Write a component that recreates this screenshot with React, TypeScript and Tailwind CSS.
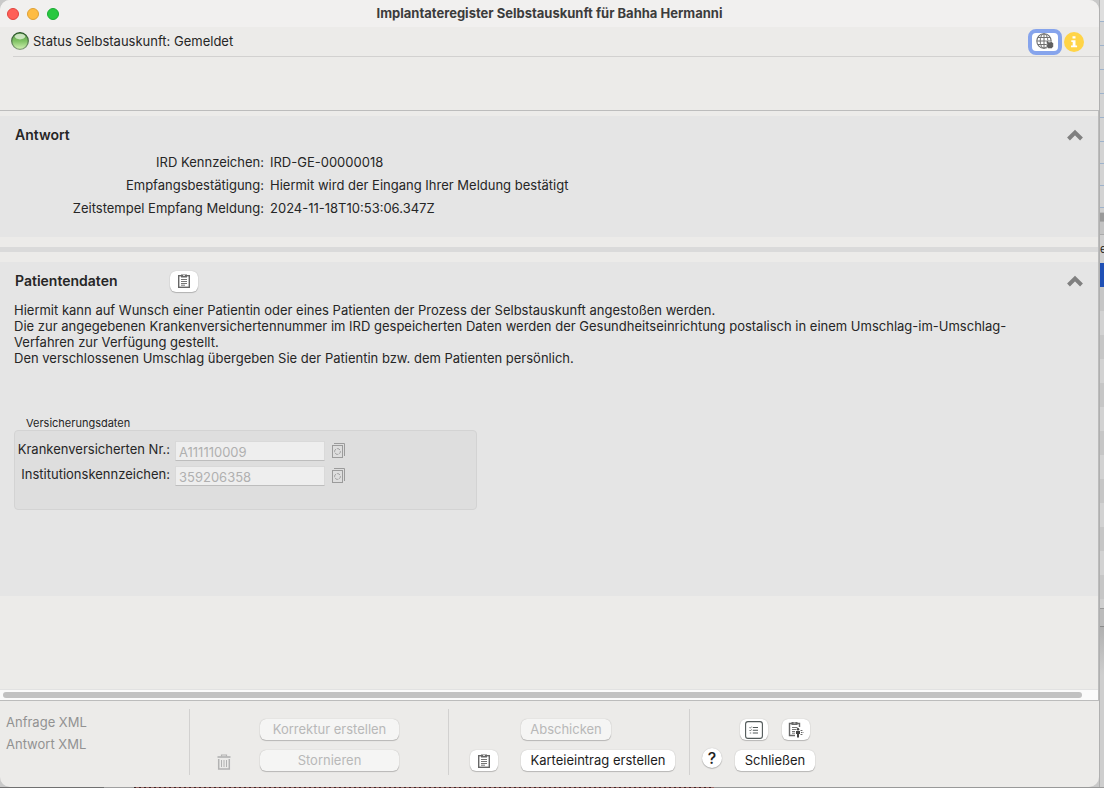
import React, { useState } from 'react';
import clsx from 'clsx';

interface IconButtonProps {
  label: string;
  children: React.ReactNode;
}

interface PushButtonProps {
  children: React.ReactNode;
  className?: string;
  disabled?: boolean;
}

interface InsuranceFieldProps {
  id: string;
  label: string;
  value: string;
}

const answerRows = [
  { label: 'IRD Kennzeichen:', value: 'IRD-GE-00000018' },
  { label: 'Empfangsbestätigung:', value: 'Hiermit wird der Eingang Ihrer Meldung bestätigt' },
  { label: 'Zeitstempel Empfang Meldung:', value: '2024-11-18T10:53:06.347Z' }
];

const ClipboardIcon = () => (
  <svg width="12" height="14" viewBox="0 0 12 14" fill="none" stroke="#666" aria-hidden="true">
    <rect x="0.7" y="1.7" width="10.6" height="11.6" strokeWidth="1.4" />
    <path d="M3 0.5h6v3H3z" fill="#666" stroke="none" />
    <path d="M5 1.5h2" stroke="#ddd" />
    <path d="M3 5.5h6M3 7.5h6M3 9.5h6M3 11.2h4" strokeWidth="0.9" />
  </svg>
);

const ClipboardSendIcon = () => (
  <svg width="16" height="17" viewBox="0 0 16 17" fill="none" stroke="#666" aria-hidden="true">
    <path d="M11.5 6V2.5h-10v12H7" strokeWidth="1.4" />
    <path d="M3.5 1h6v3h-6z" fill="#666" stroke="none" />
    <path d="M5.5 2h2" stroke="#ddd" />
    <path d="M4 6.5h5.5M4 8.5h4M4 10.5h3M4 12.2h3" strokeWidth="0.9" />
    <circle cx="10" cy="8.3" r="1.3" fill="#444" stroke="none" />
    <path d="M8 10h4v3h-1v3.5H9V13H8z" fill="#444" stroke="none" />
    <path d="M12.5 9.5H15M13 11.5h2.5M12.5 13.5H15" strokeDasharray="1.5 0.6" />
  </svg>
);

const ChecklistIcon = () => (
  <svg width="18" height="18" viewBox="0 0 18 18" fill="none" stroke="#505858" aria-hidden="true">
    <rect x="0.6" y="0.6" width="16.8" height="16.8" rx="2.4" strokeWidth="1.1" />
    <path d="M7.8 6.5H13M7.8 9.3H13M7.8 12H13" strokeWidth="1.1" />
    <path d="M4.5 6.4l.8.8 1.3-1.6M4.5 9.2l.8.8 1.3-1.6M4.8 12h1.4" strokeWidth="0.8" />
  </svg>
);

const GlobeIcon = () => (
  <svg width="18" height="17" viewBox="0 0 18 17" fill="none" stroke="#707070" aria-hidden="true">
    <circle cx="8" cy="8" r="7.2" strokeWidth="1.1" />
    <ellipse cx="8" cy="8" rx="3.8" ry="7.2" />
    <path d="M8 1v14M1 8h14M2 4.5h12M2 11.5h9" />
    <path
      d="M10 7.8l1.4-.6 1.4 2 2.6-.6 2 1.6v3.4l-1.6 2h-3.6l-2-2.6.8-1.4z"
      fill="#5e5e5e"
      stroke="#fff"
      strokeWidth="0.5"
    />
  </svg>
);

const CopyIcon = () => (
  <svg width="13" height="15" viewBox="0 0 13 15" fill="none" stroke="#9b9b9b" aria-hidden="true">
    <path d="M2 0.5h10.5V13" />
    <rect x="0.5" y="2.5" width="10" height="12" />
    <circle cx="5.5" cy="8.5" r="2.9" strokeDasharray="3.4 1.15" strokeDashoffset="1" />
  </svg>
);

const TrashIcon = () => (
  <svg width="14" height="16" viewBox="0 0 14 16" fill="none" stroke="#b2b2b2" aria-hidden="true">
    <path d="M4.5 2.5V1h5v1.5" strokeWidth="1.2" />
    <path d="M0.5 3h13" strokeWidth="1.6" />
    <path d="M1.7 5v10h10.6V5" strokeWidth="1.5" />
    <path d="M4.5 6v7M7 6v7M9.5 6v7" />
  </svg>
);

const StatusLamp = () => (
  <svg width="18" height="18" viewBox="0 0 18 18" aria-hidden="true">
    <defs>
      <linearGradient id="lamp" x1="0" y1="0" x2="0" y2="1">
        <stop offset="0" stopColor="#5c9a4c" />
        <stop offset="0.5" stopColor="#7fc263" />
        <stop offset="1" stopColor="#d3f2b4" />
      </linearGradient>
      <linearGradient id="rim" x1="0" y1="0" x2="0" y2="1">
        <stop offset="0" stopColor="#245024" />
        <stop offset="1" stopColor="#83a177" />
      </linearGradient>
    </defs>
    <circle cx="9" cy="9" r="8.3" fill="url(#lamp)" stroke="url(#rim)" strokeWidth="1.3" />
    <ellipse cx="9" cy="4.6" rx="5.2" ry="2.8" fill="#e9f7e2" opacity="0.75" />
  </svg>
);

const IconButton = ({ label, children }: IconButtonProps) => (
  <button
    aria-label={label}
    className="flex h-[21px] w-7 items-center justify-center rounded-md bg-white shadow-[0_0_1px_#0004,0_1px_1px_#0003]"
  >
    {children}
  </button>
);

const PushButton = ({ children, className, disabled }: PushButtonProps) => (
  <button
    disabled={disabled}
    className={clsx(
      'h-[21px] rounded-md pb-[2px] text-center shadow-[0_0_1px_#0004,0_1px_1px_#0003]',
      disabled ? 'bg-[#f5f5f4] text-[#b8b8b8]' : 'bg-white text-[#1c1c1c]',
      className
    )}
  >
    {children}
  </button>
);

const CollapseButton = ({ open, onClick }: { open: boolean; onClick: () => void }) => (
  <button aria-label="Bereich ein- oder ausklappen" aria-expanded={open} onClick={onClick}>
    <svg width="16" height="12" viewBox="0 0 16 12" className={open ? '' : 'rotate-180'}>
      <path d="M1.5 10L8 3.5l6.5 6.5" fill="none" stroke="#808080" strokeWidth="4" />
    </svg>
  </button>
);

const InsuranceField = ({ id, label, value }: InsuranceFieldProps) => (
  <div className="flex h-[25px] items-start">
    <label htmlFor={id} className="w-[155px] text-right">
      {label}
    </label>
    <input
      id={id}
      disabled
      defaultValue={value}
      className="ml-[5px] h-5 w-[150px] border border-[#d9d9d9] border-b-[#bdbdbd] bg-[#eee] px-[3px] pt-[2px] text-[#b0b0b0]"
    />
    <button disabled aria-label={`${label} übernehmen`} className="ml-[7px] mt-[2px]">
      <CopyIcon />
    </button>
  </div>
);

// Slice of the application window that lies behind this one
const BackgroundStrip = () => (
  <div className="flex w-[5px] shrink-0 flex-col overflow-hidden border-l border-[#b0b0b0] bg-[#cfcfcf]">
    <div className="h-[22px] shrink-0 border-b border-[#9eb3cc] bg-[#dedede]" />
    {[24, 24, 24, 24, 24, 22, 22, 22].map((height, index) => (
      <div key={index} className="shrink-0 border-b border-[#9eb3cc] bg-[#d3d3d3]" style={{ height }} />
    ))}
    <div className="h-[5px] border-b border-[#bbb]" />
    <div className="h-2 bg-[#999]" />
    <div className="h-[14px] border-y border-[#aaa] bg-[#c3c3c3]" />
    <div className="flex h-[28px] items-center text-[11px] text-[#222]">e</div>
    <div className="h-6 bg-[#1f50b5]" />
    {[...Array(13)].map((_, index) => (
      <div key={index} className={clsx('h-6 shrink-0', index % 2 === 0 ? 'bg-[#c6c6c6]' : 'bg-[#d2d2d2]')} />
    ))}
    <div className="h-[10px] border-b border-[#999]" />
    <div className="h-[18px] border-b border-[#8a8a8a] bg-[#bbb]" />
    <div className="flex-1 bg-linear-to-b from-[#b0b0b0] via-[#cecece] via-30% to-[#cecece]" />
  </div>
);

const App = () => {
  const [answerOpen, setAnswerOpen] = useState(true);
  const [patientOpen, setPatientOpen] = useState(true);

  return (
    <div className="flex h-screen flex-col overflow-hidden bg-[#c9c9c9] font-['Inter',sans-serif] text-[13px] leading-4 text-[#262626]">
      <div className="flex min-h-0 flex-1">
        <main className="flex min-w-0 flex-1 flex-col overflow-hidden rounded-[10px] bg-[#ecebe9]">
          <header className="grid h-[27px] shrink-0 grid-cols-[1fr_auto_1fr] items-center bg-[#f1f0ef] px-[7px]">
            <div className="flex gap-2">
              <button aria-label="Fenster schließen" className="size-3 rounded-full border border-[#e0443e] bg-[#ff5f57]" />
              <button aria-label="Minimieren" className="size-3 rounded-full border border-[#dea035] bg-[#febc42]" />
              <button aria-label="Maximieren" className="size-3 rounded-full border border-[#1aab33] bg-[#28c840]" />
            </div>
            <h1 className="pb-[2px] font-bold text-[#3c3c3c]">Implantateregister Selbstauskunft für Bahha Hermanni</h1>
          </header>

          <div className="flex h-[29px] shrink-0 items-center pl-[11px] pr-[15px]">
            <div className="flex items-center gap-1 pb-[2px]">
              <StatusLamp />
              <span>Status Selbstauskunft: Gemeldet</span>
            </div>
            <button
              aria-label="Webseite öffnen"
              className="ml-auto flex h-[26px] w-[34px] items-center justify-center rounded-lg border-4 border-[#86a4ec] bg-white"
            >
              <GlobeIcon />
            </button>
            <button aria-label="Information" className="ml-[2px]">
              <svg width="20" height="20" viewBox="0 0 20 20">
                <circle cx="10" cy="10" r="10" fill="#ffd447" />
                <path d="M8.5 4.3h3v2.3h-3zM7.3 8.3h4.2v5.2h1.6v1.7H7v-1.7h1.7V10H7.3z" fill="#fff" />
              </svg>
            </button>
          </div>
          <div className="ml-[13px] h-px shrink-0 bg-[#d2d1d0]" />

          <div className="mt-[53px] flex min-h-0 flex-1 flex-col border-y border-r border-[#bcbcbc]">
            <section className="mt-[5px] shrink-0 bg-[#e5e5e5]">
              <div className="flex h-[38px] items-center justify-between px-[15px]">
                <h2 className="text-sm font-semibold">Antwort</h2>
                <CollapseButton open={answerOpen} onClick={() => setAnswerOpen(!answerOpen)} />
              </div>
              {answerOpen && (
                <dl className="grid grid-cols-[264px_1fr] gap-x-[6px] gap-y-[7px] pb-[21px]">
                  {answerRows.map((row) => (
                    <React.Fragment key={row.label}>
                      <dt className="text-right">{row.label}</dt>
                      <dd>{row.value}</dd>
                    </React.Fragment>
                  ))}
                </dl>
              )}
            </section>

            <div className="my-[10px] h-[5px] shrink-0 bg-[#dadada]" />

            <section className={clsx('shrink-0 bg-[#e5e5e5]', patientOpen && 'pb-[86px]')}>
              <div className="flex h-[38px] items-center px-[15px]">
                <h2 className="w-[155px] text-sm font-semibold">Patientendaten</h2>
                <IconButton label="Patientendaten kopieren">
                  <ClipboardIcon />
                </IconButton>
                <div className="ml-auto flex">
                  <CollapseButton open={patientOpen} onClick={() => setPatientOpen(!patientOpen)} />
                </div>
              </div>
              {patientOpen && (
                <div className="px-[14px] pt-[2px]">
                  <p className="whitespace-nowrap">
                    Hiermit kann auf Wunsch einer Patientin oder eines Patienten der Prozess der Selbstauskunft angestoßen werden.
                    <br />
                    Die zur angegebenen Krankenversichertennummer im IRD gespeicherten Daten werden der Gesundheitseinrichtung postalisch in einem Umschlag-im-Umschlag-
                    <br />
                    Verfahren zur Verfügung gestellt.
                    <br />
                    Den verschlossenen Umschlag übergeben Sie der Patientin bzw. dem Patienten persönlich.
                  </p>
                  <h3 className="mt-[50px] pl-3 text-[11px] leading-[14px]">Versicherungsdaten</h3>
                  <div className="h-20 w-[463px] rounded-[4px] border border-[#d3d3d3] bg-[#dedede] pt-[10px]">
                    <InsuranceField id="kv-nr" label="Krankenversicherten Nr.:" value="A111110009" />
                    <InsuranceField id="ik" label="Institutionskennzeichen:" value="359206358" />
                  </div>
                </div>
              )}
            </section>

            <div className="mt-auto h-[11px] shrink-0 border-t border-[#e2e2e2] bg-[#fafafa] pl-[3px] pr-4 pt-[2px]">
              <div className="h-[6px] rounded-full bg-[#c1c1c1]" />
            </div>
          </div>

          <footer className="flex h-[86px] shrink-0 pb-3 pt-2">
            <div className="flex w-[190px] flex-col gap-[6px] border-r border-[#d2d1d0] pl-[6px] pt-[5px] text-[#929292]">
              <span>Anfrage XML</span>
              <span>Antwort XML</span>
            </div>
            <div className="flex w-[259px] gap-[29px] border-r border-[#d2d1d0] pl-[27px] pt-[10px]">
              <button disabled aria-label="Löschen" className="mt-[35px] h-4">
                <TrashIcon />
              </button>
              <div className="flex flex-col gap-[10px]">
                <PushButton disabled className="w-[139px]">Korrektur erstellen</PushButton>
                <PushButton disabled className="w-[139px]">Stornieren</PushButton>
              </div>
            </div>
            <div className="flex w-[241px] gap-[23px] border-r border-[#d2d1d0] pl-[21px] pt-[10px]">
              <div className="pt-[31px]">
                <IconButton label="In Zwischenablage kopieren">
                  <ClipboardIcon />
                </IconButton>
              </div>
              <div className="flex flex-col items-start gap-[10px]">
                <PushButton disabled className="w-[90px]">Abschicken</PushButton>
                <PushButton className="w-[154px]">Karteieintrag erstellen</PushButton>
              </div>
            </div>
            <div className="flex gap-[13px] pl-3 pt-[10px]">
              <button
                aria-label="Hilfe"
                className="mt-[29px] size-5 rounded-full bg-white text-base font-medium leading-5 text-[#222] shadow-[0_0_1px_#0004,0_1px_1px_#0003]"
              >
                ?
              </button>
              <div className="flex flex-col gap-[10px]">
                <div className="flex gap-[14px] pl-[5px]">
                  <IconButton label="Protokoll">
                    <ChecklistIcon />
                  </IconButton>
                  <IconButton label="Patient übernehmen">
                    <ClipboardSendIcon />
                  </IconButton>
                </div>
                <PushButton className="w-20">Schließen</PushButton>
              </div>
            </div>
          </footer>
        </main>
        <BackgroundStrip />
      </div>
      <div className="flex h-px shrink-0">
        <div className="w-[104px] bg-[#707070]" />
        <div className="w-[30px] bg-[#a0a0a0]" />
        <div className="w-[580px] bg-[repeating-linear-gradient(90deg,#3a2626_0_2px,#9b6a68_2px_5px)]" />
        <div className="flex-1 bg-[#999]" />
      </div>
    </div>
  );
};

export default App;
